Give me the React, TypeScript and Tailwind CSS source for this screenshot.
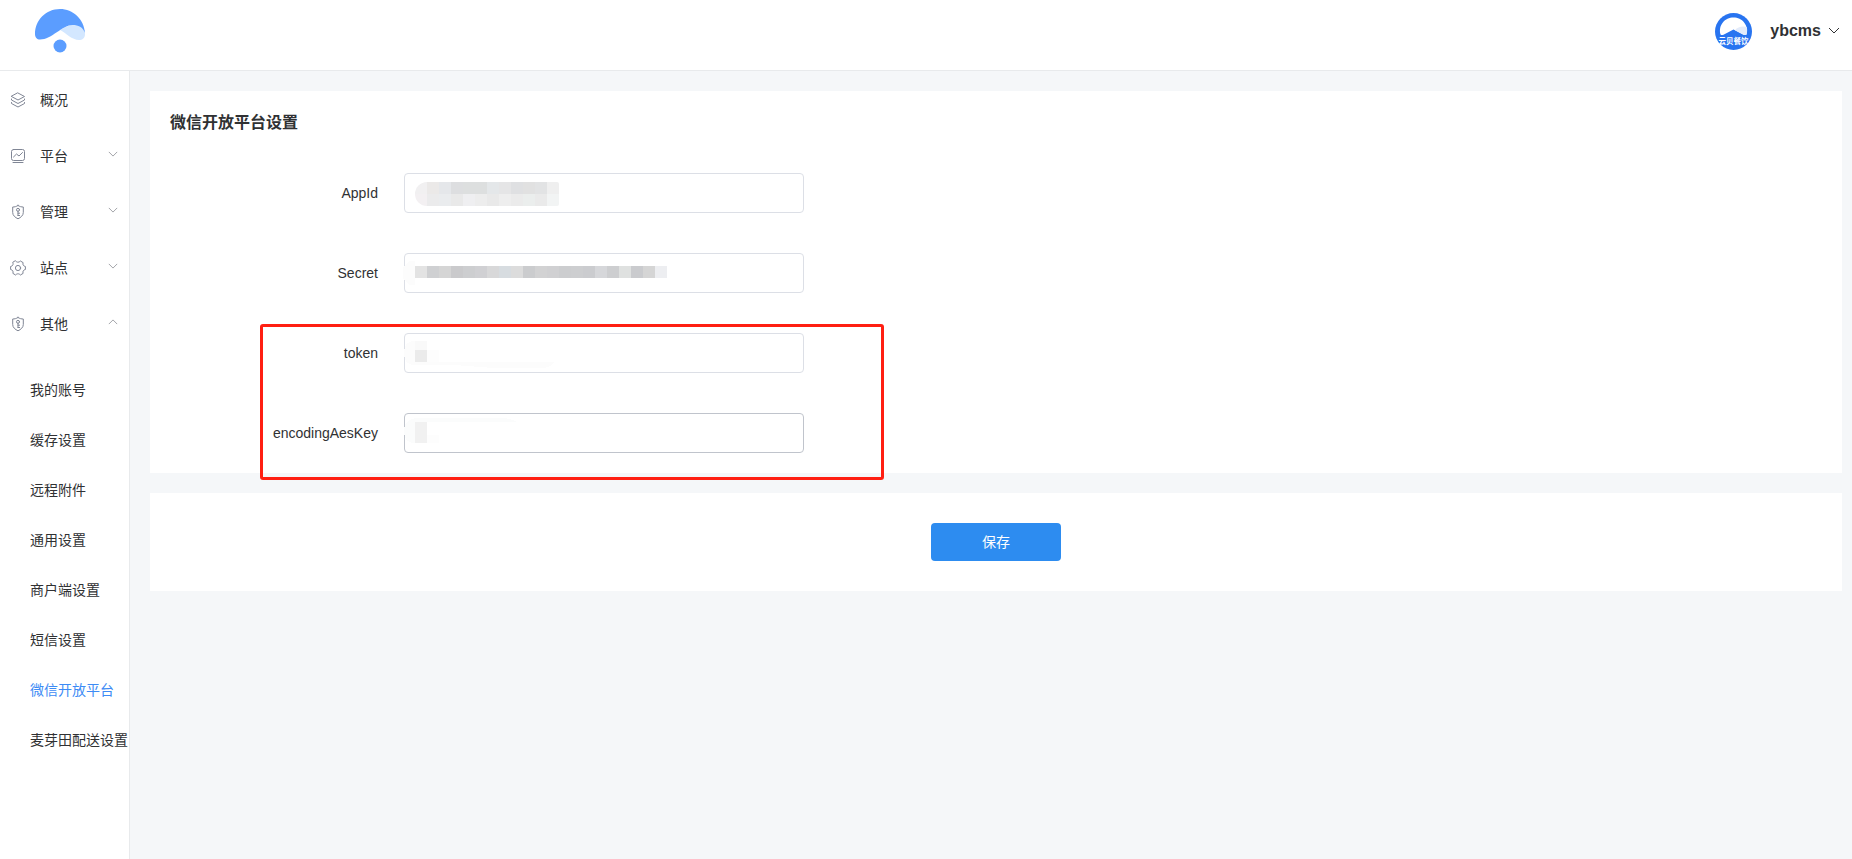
import type { ReactNode } from 'react';

interface MenuItem {
  label: string;
  icon: ReactNode;
  arrow?: 'up' | 'down';
}

interface Cell {
  x: number;
  y: number;
  w: number;
  h: number;
  fill: string;
}

interface FieldProps {
  id: string;
  label: string;
  inputClass?: string;
  children?: ReactNode;
}

const Chevron = ({ up = false, className = '' }: { up?: boolean; className?: string }) => (
  <svg viewBox="0 0 12 7" fill="none" stroke="currentColor" className={className} aria-hidden="true">
    <path d={up ? 'M1 6 L6 1 L11 6' : 'M1 1 L6 6 L11 1'} />
  </svg>
);

const iconProps = {
  width: 16,
  height: 16,
  viewBox: '0 0 16 16',
  fill: 'none',
  stroke: 'currentColor',
  strokeLinejoin: 'round' as const,
  strokeLinecap: 'round' as const,
  'aria-hidden': true,
};

const LayersIcon = () => (
  <svg {...iconProps}>
    <path d="M8 1 L14.5 4.5 L8 8 L1.5 4.5 Z" />
    <path d="M1.5 7 V8 L8 11.5 L14.5 8 V7" />
    <path d="M1.5 10.5 V11.5 L8 15 L14.5 11.5 V10.5" />
  </svg>
);

const ChartIcon = () => (
  <svg {...iconProps}>
    <rect x="1.5" y="1.5" width="13" height="11" rx="2" />
    <path d="M3.5 9 L6.5 6 L9 8 L12.5 4.5 M3 14.5 H13" />
  </svg>
);

const ShieldIcon = () => (
  <svg {...iconProps}>
    <path d="M8 1.5 C9.8 2.7 11.6 3 13.3 3 V8.5 C13.3 11.5 10.8 13.5 8 14.8 C5.2 13.500 2.7 11.5 2.7 8.5 V3 C4.4 3 6.2 2.7 8 1.5 Z" />
    <circle cx="8" cy="5.8" r="1.5" />
    <path d="M8 7.3 V11.5 M8 9.2 H9.6 M8 11.5 H9.6" />
  </svg>
);

const GearIcon = () => (
  <svg {...iconProps}>
    <path d="M5.6 1 C6.4 1.9 7.2 2.2 8 2.2 C8.8 2.2 9.6 1.9 10.4 1 L13.1 2.6 C12.7 3.8 12.9 4.6 13.3 5.2 C13.7 5.9 14.3 6.3 15.4 6.5 V9.5 C14.3 9.7 13.7 10.1 13.3 10.8 C12.9 11.4 12.7 12.2 13.1 13.4 L10.4 15 C9.6 14.1 8.8 13.8 8 13.8 C7.2 13.8 6.4 14.1 5.6 15 L2.9 13.4 C3.3 12.2 3.1 11.4 2.7 10.8 C2.3 10.1 1.7 9.7 0.6 9.5 V6.5 C1.7 6.3 2.3 5.9 2.7 5.2 C3.1 4.6 3.3 3.8 2.9 2.6 Z" />
    <circle cx="8" cy="8" r="2.6" />
  </svg>
);

const menu: MenuItem[] = [
  { label: '概况', icon: <LayersIcon /> },
  { label: '平台', icon: <ChartIcon />, arrow: 'down' },
  { label: '管理', icon: <ShieldIcon />, arrow: 'down' },
  { label: '站点', icon: <GearIcon />, arrow: 'down' },
  { label: '其他', icon: <ShieldIcon />, arrow: 'up' },
];

const subMenu = ['我的账号', '缓存设置', '远程附件', '通用设置', '商户端设置', '短信设置', '微信开放平台', '麦芽田配送设置'];
const activeItem = '微信开放平台';

// one row of 12px wide blocks, starting 11px into the field
const cellRow = (y: number, h: number, fills: string[]): Cell[] =>
  fills.map((fill, i) => ({ x: 11 + i * 12, y, w: 12, h, fill }));

const appIdCells = [
  ...cellRow(9, 12, ['#f1f0f1', '#ebe9e8', '#e5e7ea', '#dddee0', '#dddfdf', '#dddfdf', '#e4e7e9', '#e5e5e6', '#dfe0e2', '#e1e1e1', '#e2e3e4', '#efefef']),
  ...cellRow(21, 12, ['#f3f0f2', '#ebebec', '#eaecee', '#e9e9e9', '#efeff1', '#ededed', '#e9e9e9', '#eeeeee', '#ebebeb', '#ebeeed', '#eaeaea', '#f2f4f4']),
];

const secretCells = cellRow(13, 12, [
  '#e3e3e3', '#cfd0d2', '#d5d5d5', '#cacacc', '#cdced0', '#d0d0d3', '#d8d8d9', '#d7dce0', '#dcdcdc', '#cbccce', '#d2d2d3',
  '#d0d0d2', '#cccdcf', '#cdced0', '#cbcccf', '#d6d7da', '#cdced0', '#dfe1e0', '#cacbce', '#d5d5d5', '#edeef1',
]);

const Mosaic = ({ cells, children }: { cells: Cell[]; children?: ReactNode }) => (
  <svg
    className="pointer-events-none absolute inset-0 overflow-visible"
    width="400"
    height="40"
    viewBox="0 0 400 40"
    shapeRendering="crispEdges"
    aria-hidden="true"
  >
    {children}
    {cells.map((c) => (
      <rect key={`${c.x}-${c.y}`} x={c.x} y={c.y} width={c.w} height={c.h} fill={c.fill} />
    ))}
  </svg>
);

const Field = ({ id, label, inputClass = 'border-[#dcdfe6]', children }: FieldProps) => (
  <div className="flex items-center gap-[26px]">
    <label htmlFor={id} className="w-52 text-right text-sm">
      {label}
    </label>
    <div className="relative">
      <input id={id} type="text" className={`block h-10 w-[400px] rounded border bg-white px-3 text-sm outline-none ${inputClass}`} />
      {children}
    </div>
  </div>
);

const Logo = () => (
  <svg width="50" height="44" viewBox="0 0 50 44" aria-label="logo">
    <path d="M25 21 C31 17 36 16 41 16 C46 16 50 19 50 25 C50 29 47.5 31 44 31 C37 31 31 24 25 21 Z" fill="#d3e7ff" />
    <path d="M25 0 C38 0 49 10 50 24 C48 18 43 16 38 16 C27 16 17 30.5 5 30.5 C2 30.5 0 28.5 0 25 C0 11 11 0 25 0 Z" fill="#5b9dff" />
    <circle cx="25" cy="37" r="6.5" fill="#5b9dff" />
  </svg>
);

const Avatar = () => (
  <svg width="37" height="37" viewBox="0 0 37 37" aria-hidden="true">
    <circle cx="18.5" cy="18.5" r="18.5" fill="#2874f0" />
    <path d="M5.500 21.5 C3 12 10 4.5 18.500 4.5 C27 4.5 34 12 31.500 21.5 Q30.500 22.500 28.500 21.800 L18.500 16.5 L8.500 21.800 Q6.500 22.500 5.500 21.5 Z" fill="#fff" />
    <path d="M20 17.2 C22.500 14 27.500 12.800 31.900 14.200 C32.300 17 32.200 19 31.500 21.500 Q30.500 22.500 28.500 21.800 Z" fill="#e3ebfa" />
    <text x="18.5" y="31" textAnchor="middle" fontSize="7.5" fontWeight="700" fill="#fff">
      云贝餐饮
    </text>
  </svg>
);

export default function App() {
  return (
    <div className="flex min-h-screen flex-col bg-[#f5f7f9] font-['Liberation_Sans','Noto_Sans_CJK_SC',sans-serif] text-[#303133]">
      <header className="flex h-[71px] items-start justify-between border-b border-[#e8eaec] bg-white pl-[35px] pr-3">
        <a href="#home" className="pt-[9px]">
          <Logo />
        </a>
        <button type="button" className="mt-[13px] flex items-center">
          <Avatar />
          <span className="ml-[18px] pb-0.5 text-base font-bold">ybcms</span>
          <Chevron className="mb-0.5 ml-[7px] h-[7px] w-3" />
        </button>
      </header>

      <div className="flex grow">
        <aside className="w-[130px] shrink-0 border-r border-[#e8eaec] bg-white pt-px text-sm">
          <nav>
            {menu.map((item) => (
              <button key={item.label} type="button" className="flex h-14 w-full items-center pl-[10px] pr-[11px]">
                <span className="text-[#808695]">{item.icon}</span>
                <span className="ml-[14px]">{item.label}</span>
                {item.arrow && (
                  <Chevron up={item.arrow === 'up'} className="mb-1 ml-auto h-[6px] w-[10px] text-[#909399]" />
                )}
              </button>
            ))}
            <ul className="pt-[13px]">
              {subMenu.map((name) => (
                <li key={name}>
                  <a
                    href="#settings"
                    className={`flex h-[50px] items-center whitespace-nowrap pl-[30px] ${name === activeItem ? 'text-[#3d8bf5]' : ''}`}
                  >
                    {name}
                  </a>
                </li>
              ))}
            </ul>
          </nav>
        </aside>

        <main className="min-w-0 grow pb-5 pl-5 pr-[10px] pt-5">
          <form>
            <section className="bg-white p-5">
              <h1 className="mb-[38px] text-base leading-6 font-bold">微信开放平台设置</h1>
              <div className="flex w-fit flex-col gap-10">
                <Field id="appid" label="AppId">
                  <div className="pointer-events-none absolute inset-0 [clip-path:inset(9px_245px_7px_11px_round_12px_2px_2px_12px)]">
                    <Mosaic cells={appIdCells} />
                  </div>
                </Field>
                <Field id="secret" label="Secret">
                  <Mosaic cells={secretCells}>
                    <path d="M11 8 H6 L-1 14 V26 L6 32 H11 Z" fill="#fcfcfc" />
                  </Mosaic>
                </Field>
                <div className="relative flex flex-col gap-10">
                  <Field id="token" label="token">
                    <Mosaic
                      cells={[
                        { x: 11, y: 8, w: 12, h: 9, fill: '#f9f9f9' },
                        { x: 11, y: 17, w: 12, h: 12, fill: '#ebebeb' },
                        { x: 23, y: 17, w: 12, h: 12, fill: '#fdfdfd' },
                      ]}
                    >
                      <path d="M11 8 Q0 8 0 20 T11 32 H50 L90 35 H140 Q147 34 150 29 H11 Z" fill="#fcfcfc" />
                    </Mosaic>
                  </Field>
                  <Field id="aeskey" label="encodingAesKey" inputClass="border-[#c0c4cc]">
                    <Mosaic
                      cells={[
                        { x: 11, y: 9, w: 12, h: 21, fill: '#f1f1f1' },
                        { x: 23, y: 22, w: 12, h: 8, fill: '#fdfdfd' },
                      ]}
                    >
                      <path d="M113 9 Q105 5 98 5 H14 Q0 6 0 18 Q0 30 11 30 V9 Z" fill="#fbfcfc" />
                    </Mosaic>
                  </Field>
                  <div className="pointer-events-none absolute -bottom-[27px] -right-20 -top-[9px] left-[90px] rounded-[3px] border-3 border-[#ff1f12]" />
                </div>
              </div>
            </section>

            <section className="mt-5 flex justify-center bg-white py-[30px]">
              <button type="button" className="h-[38px] w-[130px] rounded bg-[#2d8cf0] text-sm text-white">
                保存
              </button>
            </section>
          </form>
        </main>
      </div>
    </div>
  );
}
